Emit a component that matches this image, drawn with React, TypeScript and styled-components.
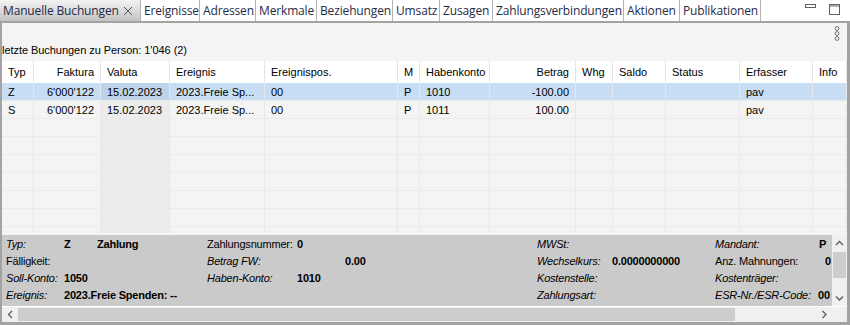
import React from "react";
import styled, { createGlobalStyle } from "styled-components";

const GlobalStyle = createGlobalStyle`
  html, body {
    margin: 0;
    padding: 0;
    background: #fff;
  }
  body {
    font-family: "Liberation Sans", Arial, sans-serif;
    font-size: 11px;
    color: #000;
  }
`;

const Window = styled.div`
  width: 850px;
  height: 325px;
  display: flex;
  flex-direction: column;
  overflow: hidden;
  background: #fff;
`;

const TabBar = styled.div`
  display: flex;
  height: 21px;
  border-bottom: 2px solid #a3a3a3;
  background: #fff;
`;

const Tab = styled.div<{ $w: number; $active?: boolean }>`
  width: ${(p) => p.$w}px;
  flex-shrink: 0;
  box-sizing: border-box;
  display: flex;
  align-items: center;
  justify-content: space-between;
  padding: 0 ${(p) => (p.$active ? 7 : 0)}px 0 3px;
  border-right: 1px solid #b4b4b4;
  font-family: "Open Sans", "Noto Sans", sans-serif;
  font-size: 12px;
  letter-spacing: -0.15px;
  color: #1f2c48;
  white-space: nowrap;
  overflow: hidden;
  background: ${(p) =>
    p.$active ? "linear-gradient(#f3f3f3, #c3c3c3)" : "#fff"};
`;

const WindowControls = styled.div`
  margin-left: auto;
  display: flex;
  align-items: flex-start;
  gap: 13px;
  padding: 4px 10px 0 0;
`;

const Panel = styled.div`
  flex: 1;
  min-height: 0;
  display: flex;
  flex-direction: column;
  border-left: 2px solid #a3a3a3;
  border-right: 3px solid #a3a3a3;
  border-bottom: 3px solid #a3a3a3;
  background: #f4f4f4;
`;

const Toolbar = styled.div`
  height: 20px;
  display: flex;
  align-items: center;
  justify-content: flex-end;
  padding-right: 7px;
`;

const Caption = styled.div`
  height: 14px;
  line-height: 14px;
  margin-bottom: 4px;
  white-space: nowrap;
  letter-spacing: -0.05px;
`;

const Grid = styled.div`
  height: 172px;
  overflow: hidden;
  margin-bottom: 2px;
`;

const Row = styled.div<{ $template: string; $h: number; $bg: string; $line: string }>`
  display: grid;
  grid-template-columns: ${(p) => p.$template};
  height: ${(p) => p.$h}px;
  box-sizing: border-box;
  background: ${(p) => p.$bg};
  border-bottom: 1px solid ${(p) => p.$line};
`;

const Cell = styled.div<{ $align: string; $bg?: string; $line: string }>`
  position: relative;
  box-sizing: border-box;
  padding: 0 6px;
  display: flex;
  align-items: center;
  justify-content: ${(p) => (p.$align === "right" ? "flex-end" : "flex-start")};
  border-right: 1px solid ${(p) => p.$line};
  background: ${(p) => p.$bg || "transparent"};
  white-space: nowrap;
  overflow: visible;
`;

const SortCaret = styled.svg`
  position: absolute;
  top: -6px;
  left: 30px;
`;

const Detail = styled.div`
  height: 71px;
  display: flex;
`;

const DetailGrid = styled.div`
  flex: 1;
  background: #cacaca;
  overflow: hidden;
  padding-left: 4px;
  display: grid;
  grid-template-columns: 58px 33px 110px 90px 48px 192px 75px 103px 103px 1fr;
  grid-auto-rows: 17px;
  align-items: center;
  letter-spacing: -0.2px;
`;

const DField = styled.div<{ $col: number; $span?: number; $italic?: boolean; $bold?: boolean; $pad?: number }>`
  grid-column: ${(p) => p.$col} / span ${(p) => p.$span || 1};
  font-style: ${(p) => (p.$italic ? "italic" : "normal")};
  font-weight: ${(p) => (p.$bold ? "bold" : "normal")};
  padding-left: ${(p) => p.$pad || 0}px;
  white-space: nowrap;
  overflow: hidden;
`;

const VScroll = styled.div`
  width: 15px;
  display: flex;
  flex-direction: column;
  background: #f0f0f0;
`;

const ArrowBox = styled.div<{ $w?: number; $h?: number }>`
  width: ${(p) => (p.$w ? `${p.$w}px` : "auto")};
  height: ${(p) => (p.$h ? `${p.$h}px` : "auto")};
  flex-shrink: 0;
  display: flex;
  align-items: center;
  justify-content: center;
`;

const VThumb = styled.div`
  margin: 1px 1px 0;
  height: 26px;
  background: #cdcdcd;
`;

const Spacer = styled.div`
  flex: 1;
`;

const HScroll = styled.div`
  height: 15px;
  display: flex;
  border-top: 1px solid #fff;
  background: #f0f0f0;
`;

const HThumb = styled.div`
  width: 717px;
  margin: 1px 0;
  background: #cdcdcd;
`;

const Chevron = ({ dir }: { dir: "up" | "down" | "left" | "right" }) => {
  const d = {
    up: "M1 5 L4.5 1.5 L8 5",
    down: "M1 1.5 L4.5 5 L8 1.5",
    left: "M5 1 L1.5 4.5 L5 8",
    right: "M1.5 1 L5 4.5 L1.5 8",
  }[dir];
  const vertical = dir === "up" || dir === "down";
  return (
    <svg width={vertical ? 9 : 7} height={vertical ? 7 : 9}>
      <path d={d} fill="none" stroke="#606060" strokeWidth="1.4" />
    </svg>
  );
};

type Col = { label: string; width: string; align: "left" | "right"; sorted?: boolean };

const columns: Col[] = [
  { label: "Typ", width: "32px", align: "left" },
  { label: "Faktura", width: "67px", align: "right" },
  { label: "Valuta", width: "69px", align: "left", sorted: true },
  { label: "Ereignis", width: "95px", align: "left" },
  { label: "Ereignispos.", width: "133px", align: "left" },
  { label: "M", width: "22px", align: "left" },
  { label: "Habenkonto", width: "70px", align: "left" },
  { label: "Betrag", width: "86px", align: "right" },
  { label: "Whg", width: "37px", align: "left" },
  { label: "Saldo", width: "53px", align: "left" },
  { label: "Status", width: "74px", align: "left" },
  { label: "Erfasser", width: "73px", align: "left" },
  { label: "Info", width: "1fr", align: "left" },
];

const template = columns.map((c) => c.width).join(" ");

const rows = [
  ["Z", "6'000'122", "15.02.2023", "2023.Freie Sp...", "00", "P", "1010", "-100.00", "", "", "", "pav", ""],
  ["S", "6'000'122", "15.02.2023", "2023.Freie Sp...", "00", "P", "1011", "100.00", "", "", "", "pav", ""],
];

const tabs = [
  { label: "Ereignisse", w: 59 },
  { label: "Adressen", w: 56 },
  { label: "Merkmale", w: 61 },
  { label: "Beziehungen", w: 76 },
  { label: "Umsatz", w: 47 },
  { label: "Zusagen", w: 53 },
  { label: "Zahlungsverbindungen", w: 131 },
  { label: "Aktionen", w: 56 },
  { label: "Publikationen", w: 81 },
];

export default function App() {
  return (
    <>
      <GlobalStyle />
      <Window>
        <TabBar>
          <Tab $w={141} $active>
            <span>Manuelle Buchungen</span>
            <svg width="10" height="10">
              <path d="M1 1 L9 9 M9 1 L1 9" stroke="#555" strokeWidth="1" />
            </svg>
          </Tab>
          {tabs.map((t) => (
            <Tab key={t.label} $w={t.w}>
              {t.label}
            </Tab>
          ))}
          <WindowControls>
            <svg width="11" height="4">
              <rect x="0.5" y="0.5" width="10" height="3" fill="none" stroke="#606060" />
            </svg>
            <svg width="11" height="11">
              <rect x="0.5" y="0.5" width="10" height="10" fill="none" stroke="#606060" />
              <line x1="0" y1="2" x2="11" y2="2" stroke="#606060" />
            </svg>
          </WindowControls>
        </TabBar>
        <Panel>
          <Toolbar>
            <svg width="6" height="15">
              <circle cx="3" cy="2.5" r="1.9" fill="none" stroke="#6f6f6f" strokeWidth="1" />
              <circle cx="3" cy="7.5" r="1.9" fill="none" stroke="#6f6f6f" strokeWidth="1" />
              <circle cx="3" cy="12.5" r="1.9" fill="none" stroke="#6f6f6f" strokeWidth="1" />
            </svg>
          </Toolbar>
          <Caption>letzte Buchungen zu Person: 1'046 (2)</Caption>
          <Grid>
            <Row $template={template} $h={22} $bg="#fff" $line="#fff">
              {columns.map((c) => (
                <Cell key={c.label} $align={c.align} $line="#e3e3e3">
                  {c.sorted && (
                    <SortCaret width="9" height="5">
                      <path d="M0.5 0.5 L4.5 4 L8.5 0.5" fill="none" stroke="#8a8a8a" strokeWidth="1" />
                    </SortCaret>
                  )}
                  {c.label}
                </Cell>
              ))}
            </Row>
            {rows.map((r, i) => (
              <Row key={i} $template={template} $h={18} $bg={i === 0 ? "#c6ddf4" : "transparent"} $line="#ebebeb">
                {r.map((v, j) => (
                  <Cell
                    key={j}
                    $align={columns[j].align}
                    $line="#e8e8e8"
                    $bg={columns[j].sorted ? (i === 0 ? "#bcd3ea" : "#ececec") : undefined}
                  >
                    {v}
                  </Cell>
                ))}
              </Row>
            ))}
            {Array.from({ length: 8 }).map((_, i) => (
              <Row key={`e${i}`} $template={template} $h={18} $bg="transparent" $line="#ebebeb">
                {columns.map((c) => (
                  <Cell key={c.label} $align={c.align} $line="#e8e8e8" $bg={c.sorted ? "#ececec" : undefined} />
                ))}
              </Row>
            ))}
          </Grid>
          <Detail>
            <DetailGrid>
              <DField $col={1} $italic>Typ:</DField>
              <DField $col={2} $bold>Z</DField>
              <DField $col={3} $bold>Zahlung</DField>
              <DField $col={4}>Zahlungsnummer:</DField>
              <DField $col={5} $bold>0</DField>
              <DField $col={7} $italic>MWSt:</DField>
              <DField $col={9} $italic>Mandant:</DField>
              <DField $col={10} $bold $pad={1}>P</DField>

              <DField $col={1}>Fälligkeit:</DField>
              <DField $col={4} $italic>Betrag FW:</DField>
              <DField $col={6} $bold>0.00</DField>
              <DField $col={7} $italic>Wechselkurs:</DField>
              <DField $col={8} $bold>0.0000000000</DField>
              <DField $col={9}>Anz. Mahnungen:</DField>
              <DField $col={10} $bold $pad={7}>0</DField>

              <DField $col={1} $italic>Soll-Konto:</DField>
              <DField $col={2} $bold>1050</DField>
              <DField $col={4} $italic>Haben-Konto:</DField>
              <DField $col={5} $bold>1010</DField>
              <DField $col={7} $italic>Kostenstelle:</DField>
              <DField $col={9} $italic>Kostenträger:</DField>

              <DField $col={1} $italic>Ereignis:</DField>
              <DField $col={2} $span={3} $bold>2023.Freie Spenden: --</DField>
              <DField $col={7} $italic>Zahlungsart:</DField>
              <DField $col={9} $italic>ESR-Nr./ESR-Code:</DField>
              <DField $col={10} $bold>00</DField>
            </DetailGrid>
            <VScroll>
              <ArrowBox $h={16}>
                <Chevron dir="up" />
              </ArrowBox>
              <VThumb />
              <Spacer />
              <ArrowBox $h={16}>
                <Chevron dir="down" />
              </ArrowBox>
            </VScroll>
          </Detail>
          <HScroll>
            <ArrowBox $w={16}>
              <Chevron dir="left" />
            </ArrowBox>
            <HThumb />
            <Spacer />
            <ArrowBox $w={16}>
              <Chevron dir="right" />
            </ArrowBox>
            <ArrowBox $w={15} />
          </HScroll>
        </Panel>
      </Window>
    </>
  );
}
